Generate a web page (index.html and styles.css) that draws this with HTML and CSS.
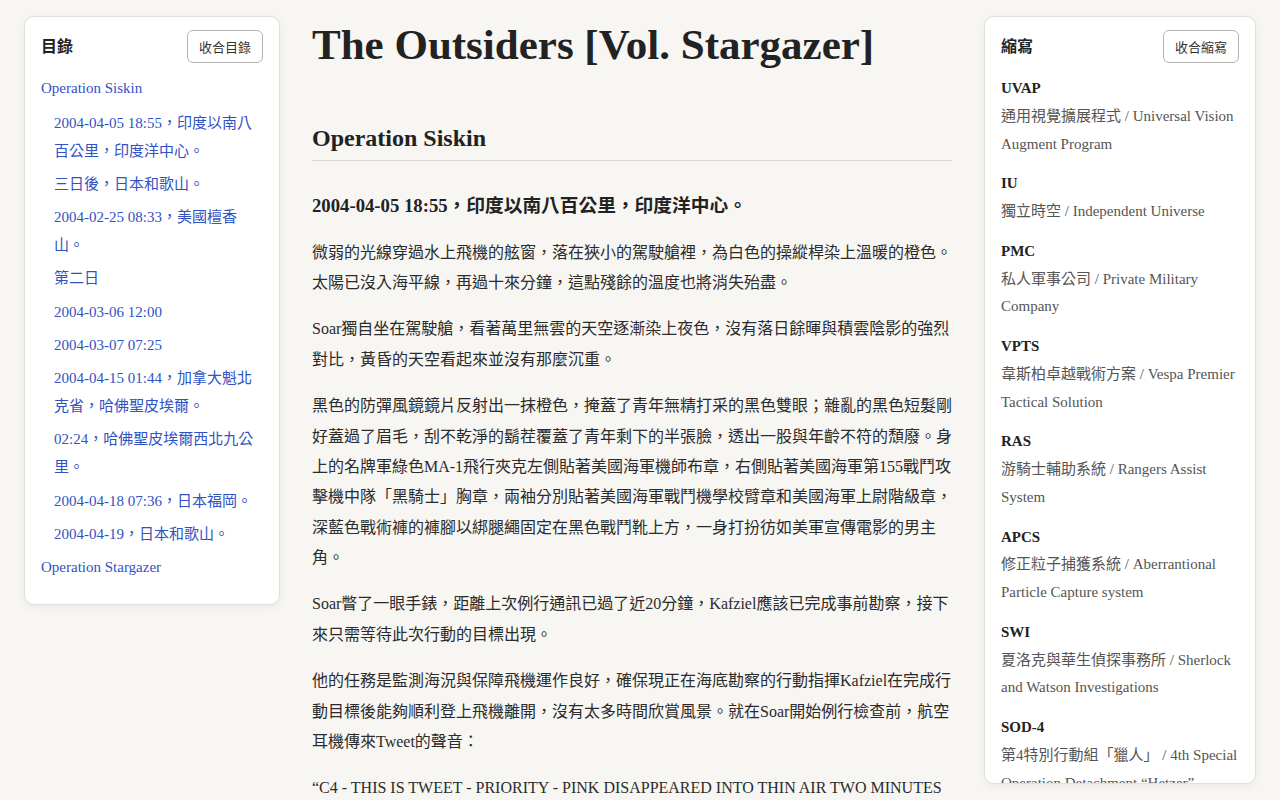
FILE: index.html
```html
<!DOCTYPE html>
<html lang="zh-Hant">
<head>
<meta charset="utf-8">
<title>The Outsiders [Vol. Stargazer]</title>
<link rel="stylesheet" href="styles.css">
</head>
<body>
<div class="layout">
  <aside class="panel toc">
    <div class="panel-head">
      <h2 class="panel-title">目錄</h2>
      <button class="panel-btn">收合目錄</button>
    </div>
    <ul class="toc-list">
      <li class="toc-top"><a href="#">Operation Siskin</a>
        <ul class="toc-sub">
          <li><a href="#">2004-04-05 18:55，印度以南八百公里，印度洋中心。</a></li>
          <li><a href="#">三日後，日本和歌山。</a></li>
          <li><a href="#">2004-02-25 08:33，美國檀香山。</a></li>
          <li><a href="#">第二日</a></li>
          <li><a href="#">2004-03-06 12:00</a></li>
          <li><a href="#">2004-03-07 07:25</a></li>
          <li><a href="#">2004-04-15 01:44，加拿大魁北克省，哈佛聖皮埃爾。</a></li>
          <li><a href="#">02:24，哈佛聖皮埃爾西北九公里。</a></li>
          <li><a href="#">2004-04-18 07:36，日本福岡。</a></li>
          <li><a href="#">2004-04-19，日本和歌山。</a></li>
        </ul>
      </li>
      <li class="toc-top"><a href="#">Operation Stargazer</a></li>
    </ul>
  </aside>

  <main class="content">
    <h1 class="title">The Outsiders [Vol. Stargazer]</h1>
    <h2 class="section">Operation Siskin</h2>
    <h3 class="scene">2004-04-05 18:55，印度以南八百公里，印度洋中心。</h3>
    <p>微弱的光線穿過水上飛機的舷窗，落在狹小的駕駛艙裡，為白色的操縱桿染上溫暖的橙色。太陽已沒入海平線，再過十來分鐘，這點殘餘的溫度也將消失殆盡。</p>
    <p>Soar獨自坐在駕駛艙，看著萬里無雲的天空逐漸染上夜色，沒有落日餘暉與積雲陰影的強烈對比，黃昏的天空看起來並沒有那麼沉重。</p>
    <p>黑色的防彈風鏡鏡片反射出一抹橙色，掩蓋了青年無精打采的黑色雙眼；雜亂的黑色短髮剛好蓋過了眉毛，刮不乾淨的鬍茬覆蓋了青年剩下的半張臉，透出一股與年齡不符的頹廢。身上的名牌軍綠色MA-1飛行夾克左側貼著美國海軍機師布章，右側貼著美國海軍第155戰鬥攻擊機中隊「黑騎士」胸章，兩袖分別貼著美國海軍戰鬥機學校臂章和美國海軍上尉階級章，深藍色戰術褲的褲腳以綁腿繩固定在黑色戰鬥靴上方，一身打扮彷如美軍宣傳電影的男主角。</p>
    <p>Soar瞥了一眼手錶，距離上次例行通訊已過了近20分鐘，Kafziel應該已完成事前勘察，接下來只需等待此次行動的目標出現。</p>
    <p>他的任務是監測海況與保障飛機運作良好，確保現正在海底勘察的行動指揮Kafziel在完成行動目標後能夠順利登上飛機離開，沒有太多時間欣賞風景。就在Soar開始例行檢查前，航空耳機傳來Tweet的聲音：</p>
    <p>“C4 - THIS IS TWEET - PRIORITY - PINK DISAPPEARED INTO THIN AIR TWO MINUTES AGO - REQUEST STATUS - OVER.”</p>
  </main>

  <aside class="panel abbr">
    <div class="panel-head">
      <h2 class="panel-title">縮寫</h2>
      <button class="panel-btn">收合縮寫</button>
    </div>
    <dl class="abbr-list">
      <dt>UVAP</dt>
      <dd>通用視覺擴展程式 / Universal Vision Augment Program</dd>
      <dt>IU</dt>
      <dd>獨立時空 / Independent Universe</dd>
      <dt>PMC</dt>
      <dd>私人軍事公司 / Private Military Company</dd>
      <dt>VPTS</dt>
      <dd>韋斯柏卓越戰術方案 / Vespa Premier Tactical Solution</dd>
      <dt>RAS</dt>
      <dd>游騎士輔助系統 / Rangers Assist System</dd>
      <dt>APCS</dt>
      <dd>修正粒子捕獲系統 / Aberrantional Particle Capture system</dd>
      <dt>SWI</dt>
      <dd>夏洛克與華生偵探事務所 / Sherlock and Watson Investigations</dd>
      <dt>SOD-4</dt>
      <dd>第4特別行動組「獵人」 / 4th Special Operation Detachment “Hetzer”</dd>
      <dt>HQ</dt>
      <dd>總部 / Headquarters</dd>
    </dl>
  </aside>
</div>
</body>
</html>
```

FILE: styles.css
```css
* { box-sizing: border-box; }

html, body {
  margin: 0;
  padding: 0;
  height: 100%;
  overflow: hidden;
}

body {
  background: #f7f6f3;
  color: #2b2b2b;
  font-family: "Liberation Serif", "Noto Sans CJK TC", serif;
}

.layout {
  display: grid;
  grid-template-columns: 256px 640px 272px;
  column-gap: 32px;
  align-items: start;
  padding: 16px 24px;
}

.panel {
  background: #ffffff;
  border: 1px solid #e2e0dc;
  border-radius: 10px;
  box-shadow: 0 2px 8px rgba(0, 0, 0, 0.06);
  padding: 13px 16px 16px;
}

.toc {
  padding-bottom: 22px;
}

.abbr {
  height: 768px;
  overflow: hidden;
}

.panel-head {
  display: flex;
  justify-content: space-between;
  align-items: center;
}

.panel-title {
  margin: 0 0 3px;
  font-family: "Noto Sans CJK TC", sans-serif;
  font-size: 16px;
  font-weight: 700;
  color: #222;
}

.panel-btn {
  font-family: "Noto Sans CJK TC", sans-serif;
  font-size: 13px;
  color: #333;
  background: #fff;
  border: 1px solid #b5b5b5;
  border-radius: 6px;
  height: 33px;
  padding: 0 11px;
}

.toc-list, .toc-sub {
  list-style: none;
  margin: 0;
  padding: 0;
  font-size: 15px;
}

.toc-list {
  margin-top: 12px;
}

.toc-list a {
  color: #2f52c4;
  text-decoration: none;
}

.toc-top {
  line-height: 27.75px;
}

.toc-top + .toc-top {
  margin-top: 5.6px;
}

.toc-sub {
  padding-left: 13px;
  margin-top: 7px;
}

.toc-sub li {
  line-height: 27.75px;
  margin-bottom: 5.6px;
}

.toc-sub li:last-child {
  margin-bottom: 0;
}

.content {
  min-width: 0;
}

.title {
  margin: 1px 0 0;
  font-size: 43px;
  line-height: 1.3;
  font-weight: 700;
  color: #222;
}

.section {
  margin: 49px 0 0;
  font-size: 24px;
  line-height: 1.4;
  font-weight: 700;
  color: #222;
  padding-bottom: 5px;
  border-bottom: 1px solid #d9d7d3;
}

.scene {
  margin: 31px 0 17px;
  font-size: 18.72px;
  line-height: 1.5;
  font-weight: 700;
  color: #222;
}

.content p {
  margin: 0 0 16px;
  font-size: 16px;
  line-height: 1.9;
  color: #2b2b2b;
}

.abbr-list {
  margin: 12px 0 0;
}

.abbr-list dt {
  font-weight: 700;
  font-size: 15px;
  line-height: 27.75px;
  color: #222;
}

.abbr-list dd {
  margin: 0 0 12px;
  font-size: 15px;
  line-height: 27.75px;
  color: #555;
}
```
